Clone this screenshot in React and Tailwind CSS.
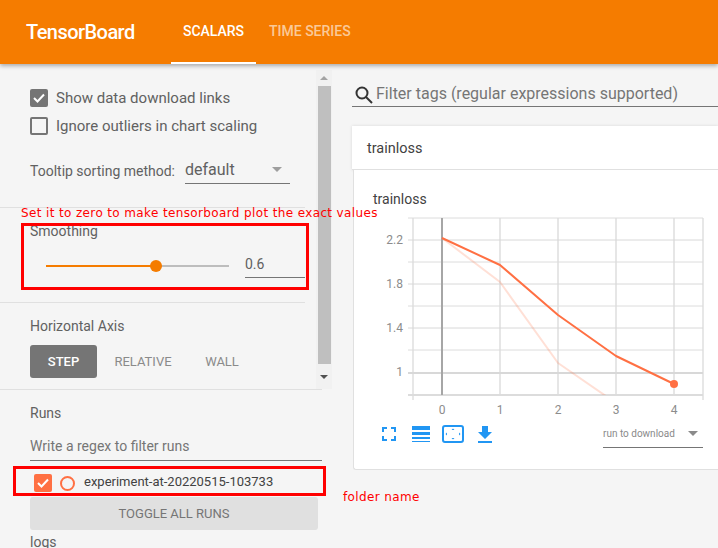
import React from "react";

const Caret = ({ color = "#8a8a8a", w = 12, h = 6 }) => (
  <svg width={w} height={h} viewBox="0 0 10 5" className="shrink-0"><path d="M0 0h10L5 5z" fill={color} /></svg>
);

function Chart() {
  const hs = [240, 284, 328, 373];
  const hm = [218, 262, 306, 350, 395];
  const vs = [413, 442, 500, 558, 616, 674, 703];
  return (
    <svg width="364" height="205" viewBox="354 215 364 205" className="block">
      <defs>
        <clipPath id="plot"><rect x="413" y="218" width="290" height="177" /></clipPath>
      </defs>
      {vs.map((x, i) => (
        <line key={x} x1={x} x2={x} y1="218" y2={i === 0 || i === 6 ? 400 : 395} stroke={i === 0 || i === 6 ? "#cfcfcf" : "#e6e6e6"} strokeWidth={i === 0 || i === 6 ? 1 : 2} />
      ))}
      {hm.map((y) => <line key={y} x1="408" x2="703" y1={y} y2={y} stroke="#dcdcdc" strokeWidth={y === 395 ? 2 : 1} />)}
      {hs.map((y) => <line key={y} x1="408" x2="703" y1={y} y2={y} stroke="#d8d8d8" strokeWidth={y === 373 ? 2 : 1} />)}
      <line x1="442" x2="442" y1="218" y2="395" stroke="#a6a6a6" strokeWidth="2" />
      <g clipPath="url(#plot)" fill="none" strokeLinejoin="round">
        <polyline points="442,238 500,282 558,363 616,403" stroke="#ff7043" strokeOpacity="0.22" strokeWidth="2" />
        <polyline points="442,238 500,265 558,315 616,356 674,384" stroke="#ff7043" strokeWidth="2" />
      </g>
      <circle cx="674" cy="384" r="4" fill="#ff7043" />
      <g fontFamily="Roboto, sans-serif" fontSize="12" fill="#8c8c8c">
        <text x="403" y="244" textAnchor="end">2.2</text>
        <text x="403" y="288" textAnchor="end">1.8</text>
        <text x="403" y="332" textAnchor="end">1.4</text>
        <text x="403" y="376" textAnchor="end">1</text>
        {[0, 1, 2, 3, 4].map((n) => <text key={n} x={442 + n * 58} y="414" textAnchor="middle">{n}</text>)}
      </g>
    </svg>
  );
}

const icons = (
  <div className="flex items-center text-[#2196f3]">
    <svg width="14" height="14" viewBox="0 0 14 14" className="ml-[28px]" fill="none" stroke="#2196f3" strokeWidth="2">
      <path d="M1 5V1h4M9 1h4v4M13 9v4H9M5 13H1V9" />
    </svg>
    <svg width="18" height="16" viewBox="0 0 18 16" className="ml-[16px]" fill="#2196f3">
      <rect x="0" y="0" width="18" height="4" />
      <rect x="0" y="6" width="18" height="3" />
      <rect x="0" y="11" width="18" height="2" />
      <rect x="0" y="15" width="18" height="1" />
    </svg>
    <svg width="22" height="18" viewBox="0 0 22 18" className="ml-[12px]" fill="#2196f3">
      <rect x="1" y="1" width="20" height="16" rx="2" fill="none" stroke="#2196f3" strokeWidth="2" />
      <path d="M9.500 5h3L11 3.500zM9.500 13h3L11 14.500zM5 7.500v3L3.500 9zM17 7.500v3L18.500 9z" />
    </svg>
    <svg width="14" height="17" viewBox="0 0 14 17" className="ml-[14px]" fill="#2196f3">
      <path d="M4 0h6v6h4l-7 7-7-7h4z" />
      <rect x="0" y="15" width="14" height="2" />
    </svg>
  </div>
);

export default function App() {
  return (
    <div className="relative w-[718px] h-[548px] overflow-hidden bg-[#f5f5f5] text-[#616161] font-['Roboto',sans-serif]">
      <header className="relative z-10 h-16 bg-[#f57c00] flex items-stretch shadow-[0_2px_4px_rgba(0,0,0,0.3)]">
        <div className="ml-[26px] w-[145px] text-white text-[20px] font-medium leading-[64px] tracking-[-0.55px]">TensorBoard</div>
        <div className="w-[85px] border-b-2 border-white text-white text-sm font-medium text-center leading-[63px]">SCALARS</div>
        <div className="ml-[13px] text-white/60 text-sm font-medium leading-[63px]">TIME SERIES</div>
      </header>

      <div className="flex h-[484px]">
        <aside className="w-[332px] shrink-0 flex flex-col">
          <div className="h-[326px] flex shrink-0">
            <div className="w-[316px] pr-[11px]">
              <div className="h-[144px] border-b border-[#e0e0e0] pl-[30px] pt-[25px]">
                <div className="flex items-center h-[18px] text-[15px]">
                  <span className="w-[18px] h-[18px] rounded-[2px] bg-[#757575] flex items-center justify-center">
                    <svg width="14" height="14" viewBox="0 0 14 14" fill="none" stroke="#fff" strokeWidth="2"><path d="M2 7l3.500 3.500L12 3.500" /></svg>
                  </span>
                  <span className="ml-2">Show data download links</span>
                </div>
                <div className="flex items-center h-[18px] mt-[10px] text-[15px]">
                  <span className="w-[18px] h-[18px] rounded-[2px] border-2 border-[#757575]" />
                  <span className="ml-2">Ignore outliers in chart scaling</span>
                </div>
                <div className="flex items-end mt-[21px]">
                  <span className="text-sm leading-[20px] mb-[3px]">Tooltip sorting method:</span>
                  <div className="ml-[10px] w-[105px] h-[28px] border-b border-[#757575] flex items-center justify-between pr-[8px] text-base">
                    <span>default</span>
                    <Caret color="#9e9e9e" w={10} h={5} />
                  </div>
                </div>
              </div>
              <div className="h-[95px] border-b border-[#e0e0e0] pl-[30px] pt-[14px]">
                <div className="text-sm leading-[18px]">Smoothing</div>
                <div className="flex items-center mt-[7px] h-[38px]">
                  <div className="ml-4 w-[183px] h-[2px] bg-[#bdbdbd] relative">
                    <div className="h-full w-[110px] bg-[#f57c00]" />
                    <div className="absolute left-[104px] -top-[5px] w-3 h-3 rounded-full bg-[#f57c00]" />
                  </div>
                  <div className="ml-4 mb-[2px] w-[60px] h-[26px] border-b border-[#757575] text-sm leading-[24px]">0.6</div>
                </div>
              </div>
              <div className="h-[87px] pl-[30px] pt-[14px]">
                <div className="text-sm leading-[18px]">Horizontal Axis</div>
                <div className="flex items-center mt-[10px] text-[13px]">
                  <div className="w-[67px] h-[33px] rounded-[3px] bg-[#757575] text-white font-medium flex items-center justify-center">STEP</div>
                  <div className="w-[92px] text-center text-[#8a8a8a]">RELATIVE</div>
                  <div className="w-[66px] text-center text-[#8a8a8a]">WALL</div>
                </div>
              </div>
            </div>
            <div className="w-[16px] h-[319px] mt-[6px] bg-[#f1f1f1] flex flex-col items-center shrink-0">
              <div className="h-[16px] flex items-center justify-center"><svg width="8" height="4" viewBox="0 0 8 4"><path d="M4 0l4 4H0z" fill="#a3a3a3" /></svg></div>
              <div className="w-[13px] h-[278px] bg-[#bfbfbf]" />
              <div className="flex-1 flex items-center justify-center"><svg width="8" height="4" viewBox="0 0 8 4"><path d="M0 0h8L4 4z" fill="#505050" /></svg></div>
            </div>
          </div>

          <div className="border-t border-[#e0e0e0] w-[322px] pl-[30px] pt-[14px] -mt-[1px]">
            <div className="text-sm leading-[18px]">Runs</div>
            <div className="h-[34px] mt-[5px] border-b border-[#757575] text-sm text-[#757575] leading-[38px]">Write a regex to filter runs</div>
            <div className="flex items-center h-[28px] mt-[8px] pl-1">
              <span className="w-[18px] h-[18px] rounded-[2px] bg-[#ff7043] flex items-center justify-center">
                <svg width="14" height="14" viewBox="0 0 14 14" fill="none" stroke="#fff" strokeWidth="2"><path d="M2 7l3.500 3.500L12 3.500" /></svg>
              </span>
              <span className="ml-2 w-[15px] h-[15px] rounded-full border-2 border-[#ff7043]" />
              <span className="ml-[9px] -mt-[2px] text-[13px] text-[#424242]">experiment-at-20220515-103733</span>
            </div>
            <div className="w-[288px] h-[33px] rounded-[3px] bg-[#e0e0e0] text-[13px] text-[#757575] flex items-center justify-center">TOGGLE ALL RUNS</div>
            <div className="text-sm mt-[3px] leading-[18px]">logs</div>
          </div>
        </aside>

        <main className="flex-1 min-w-0 pl-5">
          <div className="h-[43px] border-b border-[#757575] flex items-end pb-[1px]">
            <svg width="18" height="18" viewBox="0 0 18 18" fill="none" stroke="#333" strokeWidth="2" className="ml-[3px] mb-[1px]">
              <circle cx="7" cy="7" r="5.500" /><path d="M11 11l6 6" />
            </svg>
            <span className="ml-[3px] text-base leading-[22px] text-[#757575]">Filter tags (regular expressions supported)</span>
          </div>
          <div className="mt-[19px] h-[44px] bg-white shadow-[0_0_3px_rgba(0,0,0,0.12)] border-b border-[#e0e0e0] pl-[15px] text-[14.500px] leading-[46px] text-[#424242]">trainloss</div>
          <div className="ml-[1px] h-[300px] bg-white border-l border-b border-[#e0e0e0] rounded-bl-[3px]">
            <div className="pl-[19px] pt-[21px] text-[14px] leading-[16px] text-[#424242] h-[45px]">trainloss</div>
            <Chart />
            <div className="flex items-center justify-between h-[28px]">
              <div>{icons}</div>
              <div className="mr-[15px] w-[100px] h-[27px] border-b border-[#757575] flex items-center justify-between pr-[5px] text-[10px] text-[#8a8a8a]">
                <span>run to download</span>
                <Caret w={10} h={5} />
              </div>
            </div>
          </div>
        </main>
      </div>

      <div className="absolute left-[21px] top-[205px] text-[12px] leading-[16px] tracking-[0.37px] text-[#ff0000] whitespace-nowrap font-['DejaVu_Sans',sans-serif] z-20">Set it to zero to make tensorboard plot the exact values</div>
      <div className="absolute left-[21px] top-[223px] w-[288px] h-[67px] border-[3px] border-[#ff0000] z-20" />
      <div className="absolute left-[13px] top-[466px] w-[313px] h-[30px] border-[3px] border-[#ff0000] z-20" />
      <div className="absolute left-[343px] top-[489px] text-[12px] leading-[16px] tracking-[0.37px] text-[#ff0000] whitespace-nowrap font-['DejaVu_Sans',sans-serif] z-20">folder name</div>
    </div>
  );
}
